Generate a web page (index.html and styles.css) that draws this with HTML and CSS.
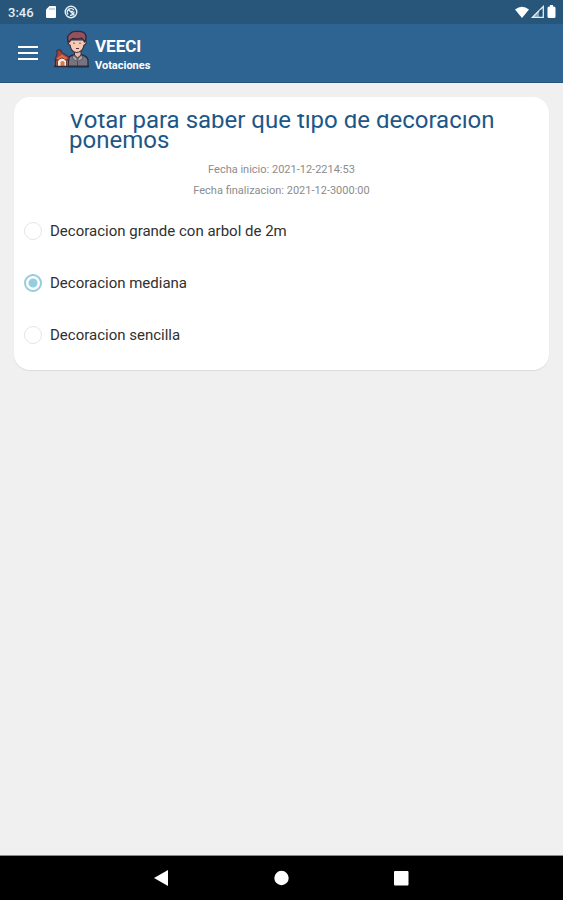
FILE: index.html
```html
<!DOCTYPE html>
<html lang="es">
<head>
<meta charset="utf-8">
<meta name="viewport" content="width=device-width, initial-scale=1">
<title>VEECI</title>
<link rel="stylesheet" href="styles.css">
</head>
<body>
<div class="status">
  <span class="clock">3:46</span>
  <svg width="12" height="14" viewBox="0 0 12 14"><path fill="#fff" d="M4.5 1H10q1 0 1 1v10q0 1-1 1H2q-1 0-1-1V4.5z"/><path stroke="#8faec4" d="M5 3v2M7 3v2M9 3v2"/></svg>
  <svg width="14" height="14" viewBox="0 0 14 14" fill="none" stroke="#e4edf3" stroke-width="1.4"><circle cx="7" cy="7" r="5.8"/><path d="M4 9.5A3.6 3.6 0 0 1 9.8 5M10 6.500A3.600 3.600 0 0 1 6 10.300M4 4l6.500 6.500M6 6.500h3"/></svg>
  <span class="signals">
    <svg width="14" height="14" viewBox="0 0 14 14"><path fill="#fff" d="M0 4.500Q7-1 14 4.500L7 13z"/></svg>
    <svg width="14" height="14" viewBox="0 0 14 14"><path fill="none" stroke="#e4edf3" stroke-width="1.300" d="M1.500 12.300L12.300 1.500v10.800z"/><path fill="#e4edf3" d="M1 12.500L8 5.500v7z" opacity=".5"/><path stroke="#24506f" stroke-width="1.500" d="M9.500 5v5"/></svg>
    <svg width="9" height="14" viewBox="0 0 9 14"><path fill="#fff" d="M3 0h3v1.500h1q1.500 0 1.500 1.500v8.500Q8.500 13 7 13H2Q.5 13 .5 11.500V3Q.5 1.500 2 1.500h1z"/></svg>
  </span>
</div>
<header class="bar">
  <button class="menu" type="button" aria-label="Menú">
    <svg width="20" height="14" viewBox="0 0 20 14"><path stroke="#fff" stroke-width="2" d="M0 1h20M0 7h20M0 13h20"/></svg>
  </button>
  <svg class="logo" width="36" height="38" viewBox="0 0 36 38" stroke-linejoin="round">
    <path fill="#77747f" stroke="#252b3f" stroke-width="1.300" d="M14 36.500V29q1-3 5-4l4-1.500 5 1.500q5.500 1.500 6 5v6.500z"/>
    <path fill="#eeb69f" stroke="#302c3d" d="M20.500 20v5l3 3 3.500-3v-5z"/>
    <path fill="#f6c9b3" stroke="#35303e" stroke-width="1.200" d="M16 10q-3 0-2 3 .5 2 2 2 1 7 6.500 7.500Q29 22 30 15q2 0 2.200-2.500.2-2.500-2.200-2.500z"/>
    <path fill="#96515d" stroke="#30283b" stroke-width="1.300" d="M14.500 12Q12 6 16 4q2-3 7-2.500Q31 1 32 6q.5 4-1.500 6-1-3-3-4-5 1.500-9 .5-2 1-3 3.500z"/>
    <path fill="none" stroke="#55363d" d="M20 12.500v1.500M26 12.500v1.500M22 18.500h3"/>
    <path fill="#aaa6ad" stroke="#4a4655" stroke-width=".8" d="M19.500 25l4 4 4-4 1.500 3-3.500 3-2-2-2 2-3-3z"/>
    <path stroke="#4a4655" d="M23.500 31v5"/>
    <path fill="#a64239" stroke="#342b38" d="M1 29L3 25v-5h4v2l8 5v4H1z"/>
    <path fill="#d96b45" d="M3 28l5-3.500 5 3.500-1 2H3z"/>
    <path fill="#b54939" stroke="#2b2938" d="M1.500 30h3v6.500h-3zM11.500 30h3v6.500h-3z"/>
    <path fill="#f5ebe4" stroke="#793e3b" d="M3.500 36.500V31q4.500-6 9 0v5.500z"/>
    <path fill="#d47c43" d="M6.500 36.500V32q2-2 4 0v4.500z"/>
    <path stroke="#252b3f" stroke-width="1.500" d="M0 36.500h35"/>
  </svg>
  <div class="brand">
    <strong class="name">VEECI</strong>
    <span class="section">Votaciones</span>
  </div>
</header>
<main class="page">
  <form class="card">
    <h1 class="title">Votar para saber que tipo de decoracion ponemos</h1>
    <p class="date">Fecha inicio: 2021-12-2214:53</p>
    <p class="date">Fecha finalizacion: 2021-12-3000:00</p>
    <div class="options">
      <label class="option"><input type="radio" name="voto">Decoracion grande con arbol de 2m</label>
      <label class="option"><input type="radio" name="voto" checked>Decoracion mediana</label>
      <label class="option"><input type="radio" name="voto">Decoracion sencilla</label>
    </div>
  </form>
</main>
<nav class="nav">
  <button type="button" aria-label="Atrás"><svg width="16" height="16" viewBox="0 0 16 16"><path fill="#fff" d="M0 8L14 0v16z"/></svg></button>
  <button type="button" aria-label="Inicio"><svg width="16" height="16" viewBox="0 0 16 16"><circle cx="7.500" cy="8" r="7.200" fill="#fff"/></svg></button>
  <button type="button" aria-label="Recientes"><svg width="16" height="16" viewBox="0 0 16 16"><rect x="0" y="1" width="14.500" height="14.500" rx="1" fill="#fff"/></svg></button>
</nav>
</body>
</html>
```
FILE: styles.css
```css
* {
  box-sizing: border-box;
}

body {
  margin: 0;
  min-height: 100vh;
  display: flex;
  flex-direction: column;
  background: #f0f0f0;
  font-family: Roboto, sans-serif;
}

svg {
  display: block;
}

button {
  padding: 0;
  border: 0;
  background: none;
}

.status {
  display: flex;
  align-items: center;
  gap: 7px;
  height: 24px;
  padding: 0 7px 0 8px;
  background: #27567a;
}

.clock {
  margin-right: 4px;
  color: #e4edf3;
  font-size: 13px;
  font-weight: 500;
}

.signals {
  display: flex;
  gap: 2px;
  margin-left: auto;
}

.bar {
  display: flex;
  align-items: center;
  height: 59px;
  padding: 0 18px 8px;
  background: #2d6491;
  border-bottom: 1px solid #245580;
  color: #fff;
}

.menu {
  margin: 8px 16px 0 0;
}

.brand {
  display: flex;
  flex-direction: column;
  gap: 4px;
  margin: 10px 0 0 5px;
}

.name {
  font-size: 17px;
  line-height: 20px;
  font-weight: 700;
}

.section {
  font-size: 11px;
  line-height: 12px;
  font-weight: 700;
}

.page {
  flex: 1;
  padding: 14px;
}

.card {
  padding: 13px 10px 9px;
  border-radius: 16px;
  background: #fff;
  box-shadow: 0 1px 1px #dcdcdc;
}

.title {
  margin: 0 40px 9px 45px;
  clip-path: inset(4px 0 -8px);
  color: #1d5788;
  font-size: 24px;
  line-height: 20px;
  font-weight: 400;
}

.date {
  margin: 0;
  color: #8c8c8c;
  font-size: 11px;
  line-height: 21px;
  text-align: center;
}

.options {
  margin-top: 4px;
}

.option {
  display: flex;
  align-items: center;
  gap: 8px;
  height: 52px;
  color: #303030;
  font-size: 15px;
}

.option input {
  appearance: none;
  width: 18px;
  height: 18px;
  margin: 0;
  border: 1px solid #e6e6e6;
  border-radius: 50%;
}

.option input:checked {
  border: 2px solid #94cddd;
  background: radial-gradient(circle, #94cddd 4px, #fff 5px);
}

.nav {
  display: flex;
  justify-content: center;
  align-items: center;
  gap: 104px;
  height: 45px;
  border-top: 1px solid #8a8a8a;
  background: #000;
}
```
